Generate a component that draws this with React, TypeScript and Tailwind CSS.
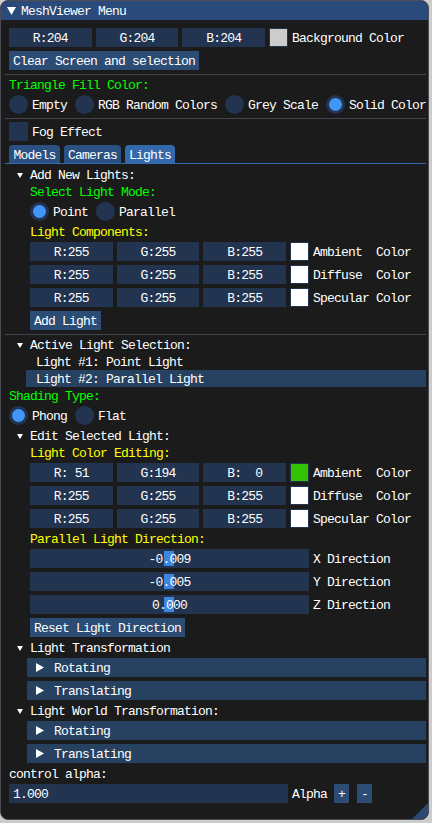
import type { ReactNode } from 'react';

// ImGui dark theme colours, blended over the window background
const FRAME = 'bg-[#22344f]';
const BUTTON = 'bg-[#2b4c74]';
const HEADER = 'bg-[#274160]';

function Line({ children, className = '' }: { children: ReactNode; className?: string }) {
  return <div className={`h-[13px] whitespace-pre leading-[15px] ${className}`}>{children}</div>;
}

function Label({ children, className = '' }: { children: ReactNode; className?: string }) {
  return <span className={`h-[19px] whitespace-pre leading-[21px] ${className}`}>{children}</span>;
}

function Separator() {
  return <div className="-mb-px -ml-[4px] h-px w-[421px] bg-[#44444d]" />;
}

function Button({ label, className = '' }: { label: string; className?: string }) {
  return (
    <div className={`h-[19px] self-start whitespace-pre px-[4px] leading-[21px] ${BUTTON} ${className}`}>
      {label}
    </div>
  );
}

function ColorRow({ r, g, b, swatch, label }: { r: string; g: string; b: string; swatch: string; label: string }) {
  return (
    <div className="flex h-[19px] items-start gap-[4px]">
      <div className="flex w-[279px] gap-[4px]">
        {[`R:${r}`, `G:${g}`, `B:${b}`].map((t) => (
          <div key={t} className={`h-[19px] flex-1 whitespace-pre text-center leading-[21px] ${FRAME}`}>
            {t}
          </div>
        ))}
        <div className="h-[19px] w-[19px] border border-[#22344f]" style={{ backgroundColor: swatch }} />
      </div>
      <Label>{label}</Label>
    </div>
  );
}

function Radio({ label, on = false }: { label: string; on?: boolean }) {
  return (
    <div className="flex h-[19px] items-start">
      <div className={`flex h-[19px] w-[19px] items-center justify-center rounded-full ${FRAME}`}>
        {on && <div className="h-[13px] w-[13px] rounded-full bg-[#4296fa]" />}
      </div>
      <Label className="ml-[4px]">{label}</Label>
    </div>
  );
}

function TreeNode({ label }: { label: string }) {
  return (
    <div className="flex h-[13px] items-start">
      <svg className="ml-[7.5px] mt-[4.5px] shrink-0" width="6" height="5" viewBox="0 0 6 5">
        <polygon points="0,0 6,0 3,5" fill="#fff" />
      </svg>
      <span className="ml-[7.5px] h-[13px] whitespace-pre leading-[15px]">{label}</span>
    </div>
  );
}

function Header({ label }: { label: string }) {
  return (
    <div className={`-ml-[3px] flex h-[19px] w-[399px] items-start ${HEADER}`}>
      <svg className="ml-[9px] mt-[5px] shrink-0" width="8" height="9" viewBox="0 0 8 9">
        <polygon points="0,0 8,4.5 0,9" fill="#fff" />
      </svg>
      <Label className="ml-[10px]">{label}</Label>
    </div>
  );
}

function Slider({ value, label }: { value: string; label: string }) {
  return (
    <div className="flex h-[19px] items-start gap-[4px]">
      <div className={`relative h-[19px] w-[279px] text-center leading-[21px] ${FRAME}`}>
        <div className="absolute left-[134px] top-[2px] h-[15px] w-[10px] bg-[#3d85e0]" />
        <span className="relative">{value}</span>
      </div>
      <Label>{label}</Label>
    </div>
  );
}

export default function App() {
  return (
    <div className="h-[823px] w-[432px] overflow-hidden bg-[#cccccc] font-['Liberation_Mono','DejaVu_Sans_Mono',monospace] text-[13px] tracking-[-0.8px] text-white">
      <div className="relative flex h-[820px] w-[429px] flex-col overflow-hidden rounded-[8px] border border-[#4c4c56] bg-[#1b1b1b]">
        {/* title bar */}
        <div className="flex h-[19px] shrink-0 items-start bg-[#294a7a]">
          <svg className="ml-[6px] mt-[6px] shrink-0" width="9" height="8" viewBox="0 0 9 8">
            <polygon points="0,0 9,0 4.5,8" fill="#fff" />
          </svg>
          <Label className="ml-[5px]">MeshViewer Menu</Label>
        </div>

        <div className="flex flex-col gap-[4px] pl-[8px] pt-[8px]">
          <ColorRow r="204" g="204" b="204" swatch="#cccccc" label="Background Color" />
          <Button label="Clear Screen and selection" />
          <Separator />
          <Line className="text-[#00ff00]">Triangle Fill Color:</Line>
          <div className="flex h-[19px] gap-[8px]">
            <Radio label="Empty" />
            <Radio label="RGB Random Colors" />
            <Radio label="Grey Scale" />
            <Radio label="Solid Color" on />
          </div>
          <Separator />
          <div className="flex h-[19px] items-start">
            <div className={`h-[19px] w-[19px] ${FRAME}`} />
            <Label className="ml-[4px]">Fog Effect</Label>
          </div>

          {/* tabs */}
          <div className="flex flex-col">
            <div className="flex h-[18px] items-start gap-[4px]">
              <div className="h-[18px] w-[51px] rounded-t-[4px] bg-[#2b5183] text-center leading-[21px]">Models</div>
              <div className="h-[18px] w-[57px] rounded-t-[4px] bg-[#2b5183] text-center leading-[21px]">Cameras</div>
              <div className="h-[18px] w-[50px] rounded-t-[4px] bg-[#3369ad] text-center leading-[21px]">Lights</div>
            </div>
            <div className="-ml-[4px] h-px w-[421px] bg-[#3369ad]" />
          </div>

          <TreeNode label="Add New Lights:" />
          <div className="ml-[21px] flex flex-col gap-[4px]">
            <Line className="text-[#00ff00]">Select Light Mode:</Line>
            <div className="flex h-[19px] gap-[8px]">
              <Radio label="Point" on />
              <Radio label="Parallel" />
            </div>
            <Line className="text-[#ffff00]">Light Components:</Line>
            <ColorRow r="255" g="255" b="255" swatch="#ffffff" label="Ambient  Color" />
            <ColorRow r="255" g="255" b="255" swatch="#ffffff" label="Diffuse  Color" />
            <ColorRow r="255" g="255" b="255" swatch="#ffffff" label="Specular Color" />
            <Button label="Add Light" />
          </div>
          <Separator />

          <TreeNode label="Active Light Selection:" />
          <div className="ml-[21px] flex flex-col gap-[4px]">
            <div className="-my-[2px] -ml-[4px] h-[17px] w-[400px] whitespace-pre pl-[10px] pt-[2px] leading-[15px]">
              Light #1: Point Light
            </div>
            <div className={`-my-[2px] -ml-[4px] h-[17px] w-[400px] whitespace-pre pl-[10px] pt-[2px] leading-[15px] ${HEADER}`}>
              Light #2: Parallel Light
            </div>
          </div>
          <Line className="text-[#00ff00]">Shading Type:</Line>
          <div className="flex h-[19px] gap-[8px]">
            <Radio label="Phong" on />
            <Radio label="Flat" />
          </div>

          <TreeNode label="Edit Selected Light:" />
          <div className="ml-[21px] flex flex-col gap-[4px]">
            <Line className="text-[#ffff00]">Light Color Editing:</Line>
            <ColorRow r=" 51" g="194" b="  0" swatch="#33c200" label="Ambient  Color" />
            <ColorRow r="255" g="255" b="255" swatch="#ffffff" label="Diffuse  Color" />
            <ColorRow r="255" g="255" b="255" swatch="#ffffff" label="Specular Color" />
            <Line className="text-[#ffff00]">Parallel Light Direction:</Line>
            <Slider value="-0.009" label="X Direction" />
            <Slider value="-0.005" label="Y Direction" />
            <Slider value="0.000" label="Z Direction" />
            <Button label="Reset Light Direction" />
          </div>

          <TreeNode label="Light Transformation" />
          <div className="ml-[21px] flex flex-col gap-[4px]">
            <Header label="Rotating" />
            <Header label="Translating" />
          </div>

          <TreeNode label="Light World Transformation:" />
          <div className="ml-[21px] flex flex-col gap-[4px]">
            <Header label="Rotating" />
            <Header label="Translating" />
          </div>

          <Line>control alpha:</Line>
          <div className="flex h-[19px] items-start">
            <div className={`h-[19px] w-[279px] pl-[4px] leading-[21px] ${FRAME}`}>1.000</div>
            <Label className="ml-[4px]">Alpha</Label>
            <div className={`ml-[7px] h-[19px] w-[15px] text-center leading-[21px] ${BUTTON}`}>+</div>
            <div className={`ml-[8px] h-[19px] w-[15px] text-center leading-[21px] ${BUTTON}`}>-</div>
          </div>
        </div>

        {/* resize grip */}
        <svg className="absolute bottom-0 right-0" width="16" height="16" viewBox="0 0 16 16">
          <polygon points="16,0 16,16 0,16" fill="#2a4a70" />
        </svg>
      </div>
    </div>
  );
}
